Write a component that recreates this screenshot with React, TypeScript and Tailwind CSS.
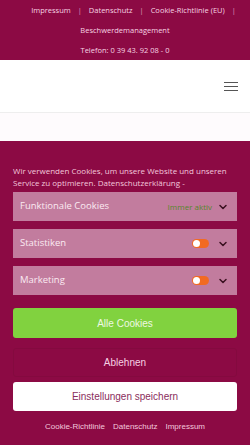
import { ChevronDown } from "lucide-react";

const rows = [
  { label: "Funktionale Cookies", always: true },
  { label: "Statistiken", always: false },
  { label: "Marketing", always: false },
];

export default function App() {
  return (
    <div className="w-[250px] h-[445px] overflow-hidden flex flex-col bg-[#8c0a44]" style={{ fontFamily: "'Open Sans', sans-serif" }}>
      {/* Top bar */}
      <div className="h-[60px] bg-[#8c0a44] flex flex-col items-center text-[7.5px] font-medium text-[#f6d3e3] leading-[20px]">
        <div className="flex gap-[7px] pl-[17px]">
          <span>Impressum</span><span className="opacity-70">|</span>
          <span>Datenschutz</span><span className="opacity-70">|</span>
          <span>Cookie-Richtlinie (EU)</span><span className="opacity-70">|</span>
        </div>
        <div>Beschwerdemanagement</div>
        <div>Telefon: 0 39 43. 92 08 - 0</div>
      </div>

      {/* Header */}
      <div className="h-[53px] bg-white border-b border-[#eeeeee] flex items-center justify-end pr-[12px]">
        <div className="flex flex-col gap-[3px] w-[14px]">
          <span className="h-[1px] bg-[#555]" />
          <span className="h-[1px] bg-[#555]" />
          <span className="h-[1px] bg-[#555]" />
        </div>
      </div>
      <div className="h-[28px] bg-[#fefbfd]" />

      {/* Cookie banner */}
      <div className="flex-1 bg-[#8c0a44] px-[13px] pt-[24px] flex flex-col">
        <p className="text-[8px] leading-[12px] text-[#f3c8dc]">
          Wir verwenden Cookies, um unsere Website und unseren Service zu optimieren. Datenschutzerklärung -
        </p>
        <div className="mt-[3px] flex flex-col gap-[8px]">
          {rows.map(r => (
            <div key={r.label} className="h-[29px] bg-[#c27c9e] flex items-center pl-[7px] pr-[8px]">
              <span className="text-[9.5px] text-[#fbeaf2] flex-1">{r.label}</span>
              {r.always ? (
                <span className="text-[8px] text-[#55882a] mr-[5px]">Immer aktiv</span>
              ) : (
                <span className="w-[17px] h-[9px] rounded-full bg-[#f26a22] flex items-center pl-[1px] mr-[8px]">
                  <span className="w-[7px] h-[7px] rounded-full bg-white" />
                </span>
              )}
              <ChevronDown size={12} strokeWidth={3} className="text-[#3a1020]" />
            </div>
          ))}
        </div>

        <div className="mt-[13px] h-[30px] rounded-[3px] bg-[#81d23f] flex items-center justify-center text-[10px] text-[#eef8e2]" style={{ fontFamily: "'Liberation Sans', Arial, sans-serif" }}>
          Alle Cookies
        </div>
        <div className="mt-[10px] h-[29px] rounded-[3px] border border-[#840a3f] flex items-center justify-center text-[10px] text-[#f6d1e3]" style={{ fontFamily: "'Liberation Sans', Arial, sans-serif" }}>
          Ablehnen
        </div>
        <div className="mt-[5px] h-[29px] rounded-[3px] bg-white flex items-center justify-center text-[10px] text-[#8a2d5c]" style={{ fontFamily: "'Liberation Sans', Arial, sans-serif" }}>
          Einstellungen speichern
        </div>
        <div className="mt-[10px] flex justify-center gap-[8px] text-[8px] leading-[12px] text-[#f3c8dc]" style={{ fontFamily: "'Liberation Sans', Arial, sans-serif" }}>
          <span>Cookie-Richtlinie</span>
          <span>Datenschutz</span>
          <span>Impressum</span>
        </div>
      </div>
    </div>
  );
}
